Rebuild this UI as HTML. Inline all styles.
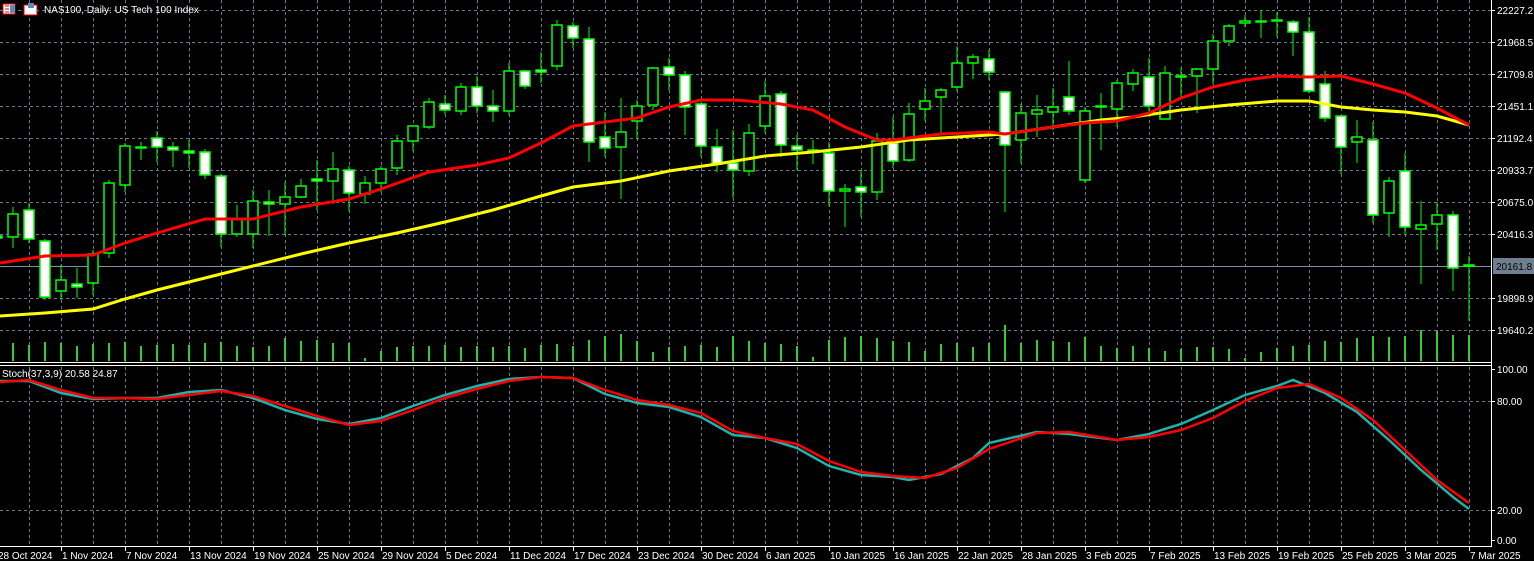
<!DOCTYPE html>
<html><head><meta charset="utf-8"><style>
html,body{margin:0;padding:0;background:#000;width:1534px;height:561px;overflow:hidden}
svg{display:block}
text{font-family:"Liberation Sans",sans-serif;font-size:10px;fill:#fff}
.g{stroke:#6b7a8a;stroke-width:1;stroke-dasharray:3,3}
.w{stroke:#00ff00;stroke-width:1}
.W{fill:#fff;stroke:#00ff00;stroke-width:1.5}
.G{fill:#000;stroke:#00ff00;stroke-width:1.5}
.v{stroke:#32cd32;stroke-width:2}
</style></head><body>
<svg width="1534" height="561" xmlns="http://www.w3.org/2000/svg">
<rect width="1534" height="561" fill="#000"/>
<g class="g">
<line x1="0" y1="10.5" x2="1491" y2="10.5"/><line x1="0" y1="42.5" x2="1491" y2="42.5"/><line x1="0" y1="74.5" x2="1491" y2="74.5"/><line x1="0" y1="106.5" x2="1491" y2="106.5"/><line x1="0" y1="138.5" x2="1491" y2="138.5"/><line x1="0" y1="170.5" x2="1491" y2="170.5"/><line x1="0" y1="202.5" x2="1491" y2="202.5"/><line x1="0" y1="234.5" x2="1491" y2="234.5"/><line x1="0" y1="298.5" x2="1491" y2="298.5"/><line x1="0" y1="330.5" x2="1491" y2="330.5"/>
<line x1="0" y1="401.5" x2="1491" y2="401.5"/><line x1="0" y1="510.5" x2="1491" y2="510.5"/>
</g>
<g class="g" id="vg">
<path d="M29.5 0V362M61.5 0V362M93.5 0V362M125.5 0V362M157.5 0V362M189.5 0V362M221.5 0V362M253.5 0V362M285.5 0V362M317.5 0V362M349.5 0V362M381.5 0V362M413.5 0V362M445.5 0V362M477.5 0V362M509.5 0V362M541.5 0V362M573.5 0V362M605.5 0V362M637.5 0V362M669.5 0V362M701.5 0V362M733.5 0V362M765.5 0V362M797.5 0V362M829.5 0V362M861.5 0V362M893.5 0V362M925.5 0V362M957.5 0V362M989.5 0V362M1021.5 0V362M1053.5 0V362M1085.5 0V362M1117.5 0V362M1149.5 0V362M1181.5 0V362M1213.5 0V362M1245.5 0V362M1277.5 0V362M1309.5 0V362M1341.5 0V362M1373.5 0V362M1405.5 0V362M1437.5 0V362M1469.5 0V362"/>
<path d="M29.5 367V546M61.5 367V546M93.5 367V546M125.5 367V546M157.5 367V546M189.5 367V546M221.5 367V546M253.5 367V546M285.5 367V546M317.5 367V546M349.5 367V546M381.5 367V546M413.5 367V546M445.5 367V546M477.5 367V546M509.5 367V546M541.5 367V546M573.5 367V546M605.5 367V546M637.5 367V546M669.5 367V546M701.5 367V546M733.5 367V546M765.5 367V546M797.5 367V546M829.5 367V546M861.5 367V546M893.5 367V546M925.5 367V546M957.5 367V546M989.5 367V546M1021.5 367V546M1053.5 367V546M1085.5 367V546M1117.5 367V546M1149.5 367V546M1181.5 367V546M1213.5 367V546M1245.5 367V546M1277.5 367V546M1309.5 367V546M1341.5 367V546M1373.5 367V546M1405.5 367V546M1437.5 367V546M1469.5 367V546"/>
</g>
<line x1="0" y1="266.5" x2="1491" y2="266.5" stroke="#8090a0" stroke-width="1"/>
<!-- volume -->
<g class="v">
<path d="M13 361V343M29 361V345M45 361V342M61 361V343M77 361V346M93 361V344M109 361V343M125 361V342M141 361V346M157 361V345M173 361V344M189 361V345M205 361V343M221 361V342M237 361V346M253 361V347M269 361V346M285 361V338M301 361V341M317 361V340M333 361V343M349 361V343M365 361V358M381 361V351M397 361V347M413 361V346M429 361V346M445 361V345M461 361V347M477 361V346M493 361V347M509 361V346M525 361V348M541 361V345M557 361V344M573 361V346M589 361V340M605 361V336M621 361V334M637 361V341M653 361V352M669 361V347M685 361V346M701 361V345M717 361V347M733 361V336M749 361V341M765 361V343M781 361V344M797 361V346M813 361V357M829 361V340M845 361V337M861 361V336M877 361V338M893 361V341M909 361V342M925 361V351M941 361V344M957 361V343M973 361V347M989 361V343M1005 361V325M1021 361V343M1037 361V340M1053 361V341M1069 361V342M1085 361V337M1101 361V346M1117 361V348M1133 361V346M1149 361V348M1165 361V351M1181 361V349M1197 361V347M1213 361V347M1229 361V349M1245 361V358M1261 361V352M1277 361V348M1293 361V346M1309 361V345M1325 361V341M1341 361V342M1357 361V338M1373 361V336M1389 361V337M1405 361V336M1421 361V330M1437 361V331M1453 361V335M1469 361V335"/>
</g>
<!-- wicks -->
<path class="w" d="M-3 235V240M13 207V248M29 203V243M45 239V300M61 265V300M77 268V298M93 250V295M109 180V258M125 143V192M141 142V160M157 131V162M173 142V167M189 140V168M205 149V179M221 174V247M237 205V237M253 190V248M269 190V236M285 182V235M301 179V198M317 160V210M333 152V204M349 166V211M365 176V204M381 166V192M397 135V175M413 126V151M429 98V129M445 95V114M461 83V115M477 76V113M493 90V122M509 63V115M525 70V89M541 52V83M557 20V70M573 22V48M589 27V162M605 112V157M621 98V199M637 100V139M653 67V110M669 58V90M685 71V135M701 104V157M717 129V172M733 130V198M749 124V176M765 81V133M781 91V157M797 135V170M813 140V164M829 142V206M845 184V227M861 170V217M877 133V200M893 117V168M909 103V162M925 88V121M941 88V134M957 46V91M973 54V79M989 50V80M1005 91V212M1021 104V163M1037 95V137M1053 88V130M1069 61V115M1085 107V183M1101 93V150M1117 80V127M1133 69V91M1149 58V111M1165 66V119M1181 68V97M1197 68V113M1213 34V84M1229 24V46M1245 15V27M1261 10V38M1277 12V37M1293 20V56M1309 17V93M1325 71V122M1341 117V174M1357 120V163M1373 122V223M1389 177V237M1405 153V234M1421 201V284M1437 202V250M1453 211V291M1469 256V321"/>
<!-- bodies -->
<g>
<rect class="W" x="-8" y="236" width="10" height="2"/>
<rect class="G" x="8" y="214" width="10" height="23"/>
<rect class="W" x="24" y="210" width="10" height="29"/>
<rect class="W" x="40" y="241" width="10" height="56"/>
<rect class="G" x="56" y="280" width="10" height="11"/>
<rect class="W" x="72" y="284" width="10" height="3"/>
<rect class="G" x="88" y="254" width="10" height="29"/>
<rect class="G" x="104" y="183" width="10" height="70"/>
<rect class="G" x="120" y="146" width="10" height="39"/>
<rect class="G" x="136" y="147" width="10" height="1"/>
<rect class="W" x="152" y="138" width="10" height="9"/>
<rect class="W" x="168" y="147" width="10" height="3"/>
<rect class="W" x="184" y="151" width="10" height="2"/>
<rect class="W" x="200" y="152" width="10" height="23"/>
<rect class="W" x="216" y="176" width="10" height="58"/>
<rect class="G" x="232" y="219" width="10" height="15"/>
<rect class="G" x="248" y="201" width="10" height="33"/>
<rect class="W" x="264" y="202" width="10" height="2"/>
<rect class="G" x="280" y="197" width="10" height="7"/>
<rect class="G" x="296" y="186" width="10" height="11"/>
<rect class="W" x="312" y="179" width="10" height="2"/>
<rect class="G" x="328" y="169" width="10" height="12"/>
<rect class="W" x="344" y="170" width="10" height="23"/>
<rect class="G" x="360" y="183" width="10" height="11"/>
<rect class="G" x="376" y="169" width="10" height="14"/>
<rect class="G" x="392" y="141" width="10" height="27"/>
<rect class="G" x="408" y="126" width="10" height="15"/>
<rect class="G" x="424" y="102" width="10" height="25"/>
<rect class="W" x="440" y="104" width="10" height="6"/>
<rect class="G" x="456" y="87" width="10" height="24"/>
<rect class="W" x="472" y="87" width="10" height="19"/>
<rect class="W" x="488" y="106" width="10" height="5"/>
<rect class="G" x="504" y="71" width="10" height="40"/>
<rect class="W" x="520" y="71" width="10" height="15"/>
<rect class="W" x="536" y="70" width="10" height="2"/>
<rect class="G" x="552" y="25" width="10" height="41"/>
<rect class="W" x="568" y="26" width="10" height="12"/>
<rect class="W" x="584" y="39" width="10" height="103"/>
<rect class="W" x="600" y="137" width="10" height="11"/>
<rect class="G" x="616" y="132" width="10" height="15"/>
<rect class="G" x="632" y="106" width="10" height="15"/>
<rect class="G" x="648" y="68" width="10" height="37"/>
<rect class="W" x="664" y="67" width="10" height="8"/>
<rect class="W" x="680" y="75" width="10" height="32"/>
<rect class="W" x="696" y="104" width="10" height="42"/>
<rect class="W" x="712" y="147" width="10" height="17"/>
<rect class="W" x="728" y="163" width="10" height="7"/>
<rect class="G" x="744" y="133" width="10" height="38"/>
<rect class="G" x="760" y="96" width="10" height="30"/>
<rect class="W" x="776" y="94" width="10" height="51"/>
<rect class="W" x="792" y="146" width="10" height="4"/>
<rect class="G" x="808" y="150" width="10" height="1"/>
<rect class="W" x="824" y="153" width="10" height="38"/>
<rect class="G" x="840" y="189" width="10" height="2"/>
<rect class="W" x="856" y="187" width="10" height="5"/>
<rect class="G" x="872" y="141" width="10" height="51"/>
<rect class="W" x="888" y="143" width="10" height="18"/>
<rect class="G" x="904" y="114" width="10" height="46"/>
<rect class="G" x="920" y="101" width="10" height="8"/>
<rect class="G" x="936" y="90" width="10" height="7"/>
<rect class="G" x="952" y="63" width="10" height="24"/>
<rect class="G" x="968" y="57" width="10" height="6"/>
<rect class="W" x="984" y="59" width="10" height="13"/>
<rect class="W" x="1000" y="92" width="10" height="53"/>
<rect class="G" x="1016" y="113" width="10" height="27"/>
<rect class="G" x="1032" y="110" width="10" height="4"/>
<rect class="G" x="1048" y="107" width="10" height="5"/>
<rect class="W" x="1064" y="97" width="10" height="14"/>
<rect class="G" x="1080" y="111" width="10" height="69"/>
<rect class="W" x="1096" y="106" width="10" height="1"/>
<rect class="G" x="1112" y="83" width="10" height="26"/>
<rect class="G" x="1128" y="73" width="10" height="11"/>
<rect class="W" x="1144" y="77" width="10" height="29"/>
<rect class="G" x="1160" y="73" width="10" height="46"/>
<rect class="W" x="1176" y="76" width="10" height="1"/>
<rect class="G" x="1192" y="69" width="10" height="7"/>
<rect class="G" x="1208" y="41" width="10" height="28"/>
<rect class="G" x="1224" y="26" width="10" height="15"/>
<rect class="G" x="1240" y="21" width="10" height="2"/>
<rect class="G" x="1256" y="21" width="10" height="1"/>
<rect class="W" x="1272" y="20" width="10" height="1"/>
<rect class="W" x="1288" y="22" width="10" height="10"/>
<rect class="W" x="1304" y="32" width="10" height="59"/>
<rect class="W" x="1320" y="84" width="10" height="34"/>
<rect class="W" x="1336" y="116" width="10" height="31"/>
<rect class="G" x="1352" y="137" width="10" height="5"/>
<rect class="W" x="1368" y="140" width="10" height="75"/>
<rect class="G" x="1384" y="181" width="10" height="32"/>
<rect class="W" x="1400" y="171" width="10" height="56"/>
<rect class="G" x="1416" y="225" width="10" height="4"/>
<rect class="G" x="1432" y="215" width="10" height="9"/>
<rect class="W" x="1448" y="215" width="10" height="53"/>
<rect class="G" x="1464" y="265" width="10" height="1"/>
</g>
<!-- MAs -->
<polyline fill="none" stroke="#ffff00" stroke-width="3" points="0,316 45,313 93,309 125,299 157,290 205,278 253,266 301,254 349,243 397,233 445,222 493,210 541,196 573,187 621,181 669,171 717,164 765,156 813,152 861,147 909,140 957,137 1005,134 1053,127 1101,120 1133,117 1181,110 1229,105 1277,101 1309,101 1341,107 1373,110 1405,112 1437,116 1469,125"/>
<polyline fill="none" stroke="#ff0000" stroke-width="3" points="0,263 45,256 93,255 125,243 157,233 205,219 253,219 301,207 349,199 381,189 429,172 477,165 509,158 541,143 573,126 605,122 637,118 669,107 701,100 733,100 749,101 781,104 813,110 845,127 877,140 893,140 941,134 989,132 1005,134 1053,127 1085,123 1117,121 1149,113 1181,98 1213,87 1245,80 1277,76 1309,77 1341,76 1373,84 1405,93 1437,108 1469,125"/>
<!-- panel separators -->
<line x1="0" y1="362.5" x2="1491" y2="362.5" stroke="#fff"/>
<line x1="0" y1="365.5" x2="1491" y2="365.5" stroke="#fff"/>
<line x1="0" y1="546.5" x2="1491" y2="546.5" stroke="#fff"/>
<line x1="1491.5" y1="0" x2="1491.5" y2="547" stroke="#fff"/>
<!-- stoch -->
<polyline fill="none" stroke="#20b2aa" stroke-width="2.5" points="0,381 29,381 61,393 93,399 125,398 157,398 189,392 221,390 253,398 285,410 317,419 349,424 381,418 413,406 445,395 477,386 509,379 541,377 573,378 605,394 637,403 669,407 701,417 733,435 765,438 797,448 829,466 861,475 893,477 909,480 941,474 973,458 989,443 1037,432 1069,434 1117,440 1149,434 1181,424 1213,410 1245,395 1277,386 1293,380 1325,393 1357,412 1389,440 1421,470 1453,497 1469,509"/>
<polyline fill="none" stroke="#ff0000" stroke-width="2.5" points="0,382 29,380 61,390 93,398 125,398 157,399 189,395 221,391 253,396 285,406 317,416 349,425 381,421 413,410 445,398 477,389 509,381 541,377 573,378 605,390 637,400 669,405 701,413 733,431 765,438 797,444 829,461 861,472 893,476 925,478 957,468 989,449 1037,433 1069,432 1117,440 1149,437 1181,430 1213,418 1245,401 1277,388 1309,384 1341,398 1373,420 1405,450 1437,480 1469,503"/>
<!-- axis ticks -->
<path stroke="#fff" d="M1491 10.5h4M1491 42.5h4M1491 74.5h4M1491 106.5h4M1491 138.5h4M1491 170.5h4M1491 202.5h4M1491 234.5h4M1491 298.5h4M1491 330.5h4M1491 369.5h4M1491 401.5h4M1491 510.5h4M1491 540.5h4"/>
<path stroke="#fff" d="M61.5 546v5M125.5 546v5M189.5 546v5M253.5 546v5M317.5 546v5M381.5 546v5M445.5 546v5M509.5 546v5M573.5 546v5M637.5 546v5M701.5 546v5M765.5 546v5M829.5 546v5M893.5 546v5M957.5 546v5M1021.5 546v5M1085.5 546v5M1149.5 546v5M1213.5 546v5M1277.5 546v5M1341.5 546v5M1405.5 546v5M1469.5 546v5"/>
<g>
<text x="1497" y="14">22227.2</text><text x="1497" y="46">21968.5</text><text x="1497" y="78">21709.8</text><text x="1497" y="110">21451.1</text><text x="1497" y="142">21192.4</text><text x="1497" y="174">20933.7</text><text x="1497" y="206">20675.0</text><text x="1497" y="238">20416.3</text><text x="1497" y="302">19898.9</text><text x="1497" y="334">19640.2</text>
<rect x="1493" y="258" width="41" height="16" fill="#6f7f8f"/><text x="1496" y="270" fill="#000" style="fill:#000">20161.8</text>
<text x="1497" y="373">100.00</text><text x="1497" y="405">80.00</text><text x="1497" y="514">20.00</text><text x="1497" y="544">0.00</text>
</g>
<g>
<text x="-2" y="559">28 Oct 2024</text><text x="62" y="559">1 Nov 2024</text><text x="126" y="559">7 Nov 2024</text><text x="190" y="559">13 Nov 2024</text><text x="254" y="559">19 Nov 2024</text><text x="318" y="559">25 Nov 2024</text><text x="382" y="559">29 Nov 2024</text><text x="446" y="559">5 Dec 2024</text><text x="510" y="559">11 Dec 2024</text><text x="574" y="559">17 Dec 2024</text><text x="638" y="559">23 Dec 2024</text><text x="702" y="559">30 Dec 2024</text><text x="766" y="559">6 Jan 2025</text><text x="830" y="559">10 Jan 2025</text><text x="894" y="559">16 Jan 2025</text><text x="958" y="559">22 Jan 2025</text><text x="1022" y="559">28 Jan 2025</text><text x="1086" y="559">3 Feb 2025</text><text x="1150" y="559">7 Feb 2025</text><text x="1214" y="559">13 Feb 2025</text><text x="1278" y="559">19 Feb 2025</text><text x="1342" y="559">25 Feb 2025</text><text x="1406" y="559">3 Mar 2025</text><text x="1470" y="559">7 Mar 2025</text>
</g>
<!-- header icons -->
<rect x="3" y="4" width="12" height="10" fill="#fff" stroke="#e00" stroke-width="1"/>
<path d="M5 6h4M5 9h4M5 12h4" stroke="#e00"/><rect x="10" y="5" width="5" height="8" fill="#5a8ac0"/>
<rect x="24" y="5" width="13" height="10" fill="#fff" stroke="#e00"/><rect x="28" y="3" width="6" height="5" fill="#5a8ac0"/>
<text x="44" y="13">NAS100, Daily:  US Tech 100 Index</text>
<text x="2" y="377">Stoch(37,3,9) 20.58 24.87</text>
</svg>
</body></html>
